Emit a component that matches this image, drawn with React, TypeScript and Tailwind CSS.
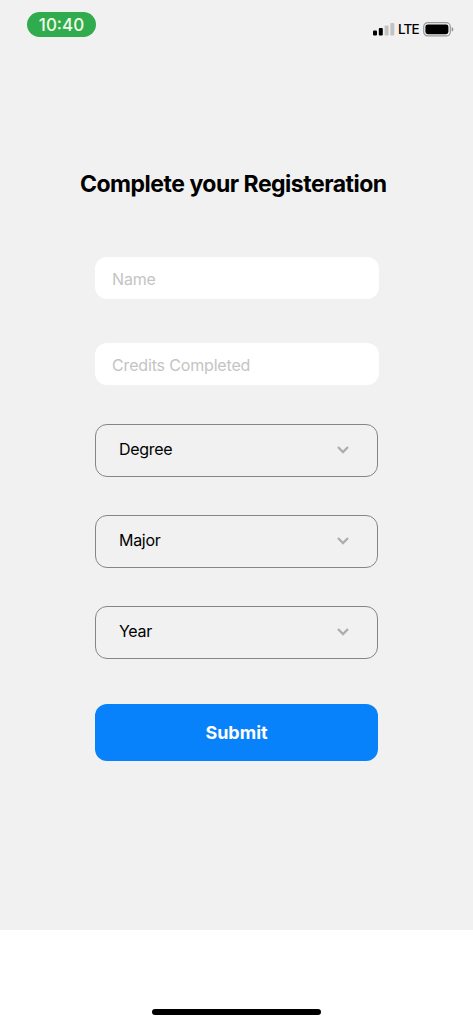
import { useState } from "react";

interface TextFieldProps {
  placeholder: string;
  value: string;
  onChange: (value: string) => void;
}

interface PickerProps {
  label: string;
  onPress: () => void;
}

function StatusBar() {
  return (
    <div className="flex h-11 items-start justify-between pt-3 pr-[19px] pl-[27px]">
      <div className="flex h-[25px] w-[69px] items-center justify-center rounded-full bg-[#30ab4d] pt-px text-[17px] leading-none font-medium text-[#f0fbe8]">
        10:40
      </div>
      <div className="mt-[9px] flex h-4 items-center">
        <svg width="22" height="14" viewBox="0 0 22 14">
          <rect x="0" y="8.5" width="4" height="5" rx="1" fill="#000" />
          <rect x="5.8" y="6" width="4" height="7.5" rx="1" fill="#000" />
          <rect x="11.6" y="3.5" width="4" height="10" rx="1" fill="#c3c3c3" />
          <rect x="17.3" y="1" width="4" height="12.5" rx="1" fill="#c3c3c3" />
        </svg>
        <span className="ml-[3px] w-[22px] text-[13.5px] leading-4 font-medium tracking-[-0.8px]">LTE</span>
        <svg className="ml-[3px]" width="31" height="15" viewBox="0 0 31 15">
          <rect x="0.7" y="0.7" width="26.6" height="13.2" rx="4" fill="none" stroke="#9a9a9a" strokeWidth="1.2" />
          <rect x="2.4" y="2.4" width="23" height="9.8" rx="2.4" fill="#000" />
          <path d="M28.7 5.2c1 .4 1.6 1.2 1.6 2.2s-.6 1.8-1.6 2.2z" fill="#8f8f8f" />
        </svg>
      </div>
    </div>
  );
}

function TextField({ placeholder, value, onChange }: TextFieldProps) {
  return (
    <input
      value={value}
      placeholder={placeholder}
      onChange={(e) => onChange(e.target.value)}
      className="block h-[42px] w-[284px] rounded-[12px] bg-white px-[17px] pt-px text-[16px] tracking-[-0.16px] text-black outline-none placeholder:text-[#c4c4c4]"
    />
  );
}

function Picker({ label, onPress }: PickerProps) {
  return (
    <button
      type="button"
      onClick={onPress}
      className="flex h-[53px] w-[283px] items-center justify-between rounded-[12px] border border-[#858585] pr-[27px] pb-[3px] pl-[23px] text-[16px] tracking-[-0.3px]"
    >
      <span>{label}</span>
      <svg width="14" height="10" viewBox="0 0 14 10" className="mt-[3px]">
        <path d="M2 2l5 5 5-5" fill="none" stroke="#adadad" strokeWidth="2.3" />
      </svg>
    </button>
  );
}

const YEARS = ["Year", "Freshman", "Sophomore", "Junior", "Senior"];
const DEGREES = ["Degree", "Bachelors", "Masters"];
const MAJORS = ["Major", "Computer Science", "Mathematics"];

export default function App() {
  const [name, setName] = useState("");
  const [credits, setCredits] = useState("");
  const [degree, setDegree] = useState(0);
  const [major, setMajor] = useState(0);
  const [year, setYear] = useState(0);

  return (
    <div className="flex h-screen min-h-[1024px] w-full flex-col bg-white font-['Inter','Liberation_Sans',sans-serif] text-black">
      <div className="h-[930px] bg-[#f1f1f1]">
        <StatusBar />
        <form className="flex flex-col pt-[124px] pl-[95px]" onSubmit={(e) => e.preventDefault()}>
          <h1 className="-ml-[15px] h-8 text-[23px] leading-8 font-bold tracking-[-0.5px] whitespace-nowrap">
            Complete your Registeration
          </h1>
          <div className="mt-[57.4px] flex flex-col gap-11">
            <TextField placeholder="Name" value={name} onChange={setName} />
            <TextField placeholder="Credits Completed" value={credits} onChange={setCredits} />
          </div>
          <div className="mt-[38.6px] flex flex-col gap-[38px]">
            <Picker label={DEGREES[degree]} onPress={() => setDegree((degree + 1) % DEGREES.length)} />
            <Picker label={MAJORS[major]} onPress={() => setMajor((major + 1) % MAJORS.length)} />
            <Picker label={YEARS[year]} onPress={() => setYear((year + 1) % YEARS.length)} />
          </div>
          <button
            type="submit"
            className="mt-[45px] h-[57px] w-[283px] rounded-[12px] bg-[#0782fb] text-[18px] font-bold text-white"
          >
            Submit
          </button>
        </form>
      </div>
      <div className="flex flex-1 items-end justify-center pb-[9px]">
        <div className="h-1.5 w-[169px] rounded-full bg-black" />
      </div>
    </div>
  );
}
